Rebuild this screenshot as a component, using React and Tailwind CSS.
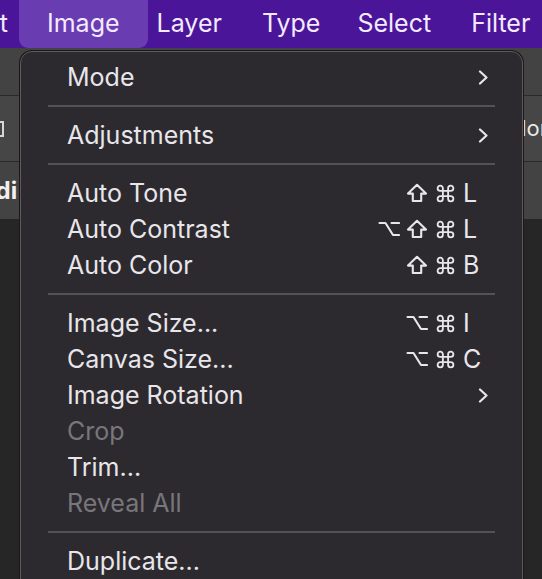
import React from "react";
import { Command } from "lucide-react";

const FONT = { fontFamily: "Inter, 'Noto Sans', sans-serif" };

function ShiftIcon() {
  return (
    <svg width="22" height="20" viewBox="0 0 22 20">
      <path d="M11 1.8 L20 10.6 H15.2 V18 H6.8 V10.6 H2 Z" fill="none" stroke="#e8e6ea" strokeWidth="2.1" strokeLinejoin="round" />
    </svg>
  );
}

function OptionIcon() {
  return (
    <svg width="22" height="16" viewBox="0 0 22 16">
      <path d="M1.5 2 H7.5 L15 14 H21 M13.5 2 H21" fill="none" stroke="#e8e6ea" strokeWidth="2.1" strokeLinejoin="round" strokeLinecap="round" />
    </svg>
  );
}

function CmdIcon() {
  return <Command size={21} strokeWidth={2.1} color="#e8e6ea" />;
}

const MOD = { shift: ShiftIcon, opt: OptionIcon, cmd: CmdIcon };

function Chevron() {
  return (
    <svg width="11" height="15" viewBox="0 0 11 15" className="ml-auto">
      <path d="M2 1.5 L8.5 7.5 L2 13.5" fill="none" stroke="#e8e6ea" strokeWidth="2.2" strokeLinecap="round" strokeLinejoin="round" />
    </svg>
  );
}

function Shortcut({ mods, k }) {
  return (
    <div className="ml-auto flex items-center">
      {mods.map((m, i) => {
        const Icon = MOD[m];
        return (
          <span key={i} className="flex w-[28px] items-center justify-center">
            <Icon />
          </span>
        );
      })}
      <span className="w-[30px] pl-[4px] text-left text-[25px] leading-none text-[#e8e6ea]">{k}</span>
    </div>
  );
}

function Item({ label, mods, k, sub, disabled }) {
  return (
    <div className="flex h-[36px] items-center pl-[46px] pr-[33px]">
      <span className={`text-[25px] leading-none ${disabled ? "text-[#78767b]" : "text-[#e8e6ea]"}`}>{label}</span>
      {sub && <Chevron />}
      {k && <Shortcut mods={mods} k={k} />}
    </div>
  );
}

function Sep() {
  return (
    <div className="flex h-[22px] items-center px-[27px]">
      <div className="h-[2px] w-full bg-[#545258]" />
    </div>
  );
}

export default function App() {
  return (
    <div style={FONT} className="relative flex h-[579px] w-[542px] flex-col overflow-hidden bg-[#262626]">
      {/* menu bar */}
      <div className="flex h-[48px] shrink-0 items-center bg-[#4a1599] text-[25px] text-[#f3eaff]">
        <div className="flex w-[8px] shrink-0 justify-end overflow-hidden">
          <span className="shrink-0">Edit</span>
        </div>
        <div className="ml-[11px] flex h-[48px] shrink-0 items-center rounded-b-[9px] bg-[#6a3cb2] px-[28px]">Image</div>
        <span className="ml-[9px] shrink-0">Layer</span>
        <span className="ml-[40px] shrink-0">Type</span>
        <span className="ml-[37px] shrink-0">Select</span>
        <span className="ml-[40px] shrink-0">Filter</span>
      </div>
      {/* toolbar rows behind */}
      <div className="flex h-[48px] shrink-0 border-b border-[#2a2a2a] bg-[#434343]" />
      <div className="flex h-[66px] shrink-0 items-center justify-between border-b border-[#2a2a2a] bg-[#464646]">
        <div className="ml-[-12px] h-[16px] w-[16px] border-2 border-[#d8d8d8]" />
        <span className="mr-[-6px] text-[22px] text-[#e8e8e8]">Color</span>
      </div>
      <div className="flex h-[57px] shrink-0 items-center bg-[#434343]">
        <span className="ml-[-19px] text-[24px] font-bold text-[#f0f0f0]">Edi</span>
      </div>
      <div className="flex-1 bg-[#262626]" />

      {/* dropdown menu */}
      <div className="absolute left-[20px] top-[51px] w-[503px] rounded-[12px] border border-[#5c5a60] bg-[#2c2a2f] pt-[7px] shadow-[0_0_0_1px_#1a1a1a]">
        <Item label="Mode" sub />
        <Sep />
        <Item label="Adjustments" sub />
        <Sep />
        <Item label="Auto Tone" mods={["shift", "cmd"]} k="L" />
        <Item label="Auto Contrast" mods={["opt", "shift", "cmd"]} k="L" />
        <Item label="Auto Color" mods={["shift", "cmd"]} k="B" />
        <Sep />
        <Item label="Image Size..." mods={["opt", "cmd"]} k="I" />
        <Item label="Canvas Size..." mods={["opt", "cmd"]} k="C" />
        <Item label="Image Rotation" sub />
        <Item label="Crop" disabled />
        <Item label="Trim..." />
        <Item label="Reveal All" disabled />
        <Sep />
        <Item label="Duplicate..." />
        <Item label="Apply Image..." />
      </div>
    </div>
  );
}
